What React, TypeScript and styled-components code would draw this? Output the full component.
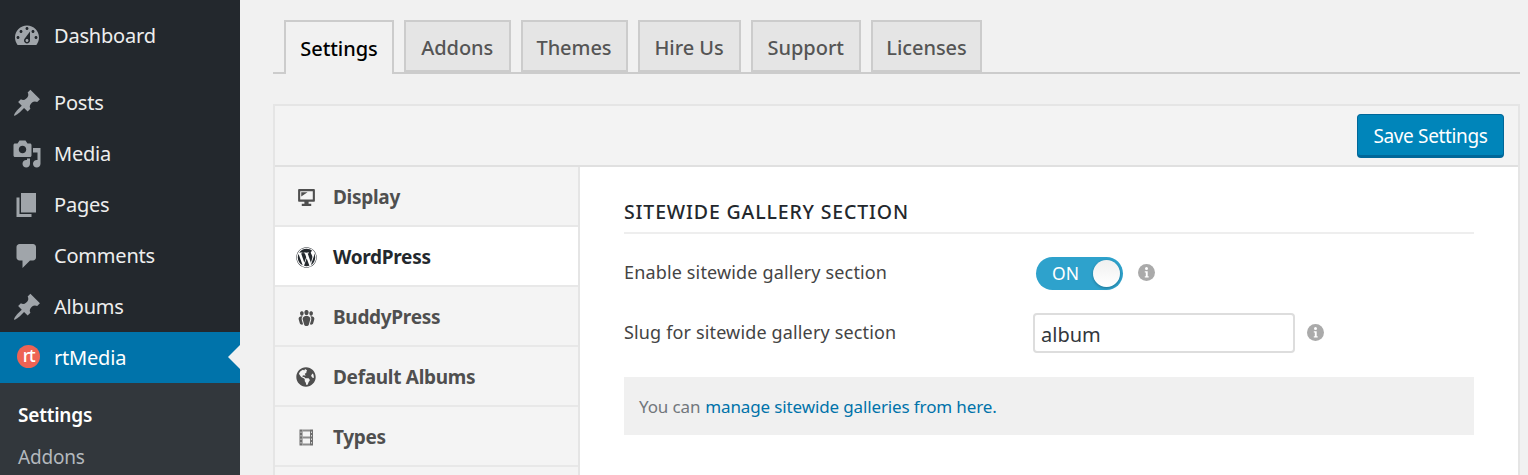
import React from "react";
import styled, { createGlobalStyle } from "styled-components";
import { FaWordpress, FaGlobeAmericas } from "react-icons/fa";

const FONT = `"Noto Sans", "Open Sans", "Liberation Sans", sans-serif`;

const Global = createGlobalStyle`
  html, body { margin: 0; padding: 0; height: 475px; overflow: hidden; background: #f1f1f1; }
  * { box-sizing: border-box; }
`;

const Page = styled.div`
  display: flex;
  width: 1528px;
  height: 475px;
  overflow: hidden;
  font-family: ${FONT};
`;

const Sidebar = styled.nav`
  width: 240px;
  flex: none;
  background: #23282d;
  padding-top: 10px;
  display: flex;
  flex-direction: column;
`;

const MenuRow = styled.div<{ $current?: boolean; $gap?: boolean }>`
  position: relative;
  height: 51px;
  flex: none;
  display: flex;
  align-items: center;
  padding-left: 12px;
  gap: 12px;
  margin-bottom: ${(p) => (p.$gap ? "16px" : "0")};
  background: ${(p) => (p.$current ? "#0073aa" : "transparent")};
  color: ${(p) => (p.$current ? "#fff" : "#eee")};
  font-size: 20px;
  letter-spacing: -0.2px;
  svg { fill: #a0a5aa; flex: none; }
`;

const Arrow = styled.span`
  position: absolute;
  right: 0;
  top: 13px;
  border: 12px solid transparent;
  border-right-color: #f1f1f1;
  border-left-width: 0;
`;

const RtLogo = styled.span`
  width: 23px;
  height: 23px;
  margin: -2px 2px 0 5px;
  border-radius: 50%;
  background: #ee6354;
  color: #fff;
  font-size: 18px;
  font-weight: 500;
  line-height: 21px;
  text-align: center;
  letter-spacing: -1.4px;
  flex: none;
`;

const Submenu = styled.div`
  flex: 1;
  background: #32373c;
  padding-top: 11px;
`;

const SubItem = styled.div<{ $current?: boolean }>`
  height: 42px;
  padding-left: 18px;
  display: flex;
  align-items: center;
  font-size: 19px;
  letter-spacing: -0.2px;
  font-weight: ${(p) => (p.$current ? 600 : 400)};
  color: ${(p) => (p.$current ? "#fff" : "#b4b9be")};
`;

const Main = styled.main`
  flex: 1;
  min-width: 0;
  padding: 20px 8px 0 33px;
  background: #f1f1f1;
`;

const TabBar = styled.div`
  height: 54px;
  display: flex;
  gap: 10px;
  padding-left: 11px;
  border-bottom: 2px solid #ccc;
`;

const Tab = styled.div<{ $active?: boolean; $w: number }>`
  width: ${(p) => p.$w}px;
  height: ${(p) => (p.$active ? "54px" : "52px")};
  display: flex;
  align-items: center;
  justify-content: center;
  padding-top: ${(p) => (p.$active ? "0" : "3px")};
  border: 2px solid #ccc;
  border-bottom: ${(p) => (p.$active ? "none" : "2px solid #ccc")};
  background: ${(p) => (p.$active ? "#f1f1f1" : "#e5e5e5")};
  color: ${(p) => (p.$active ? "#000" : "#555")};
  font-size: 20px;
  font-weight: 500;
  letter-spacing: -0.05px;
`;

const Panel = styled.section`
  margin-top: 30px;
  border: 2px solid #e5e5e5;
  border-bottom: none;
  height: 400px;
  background: #fff;
  display: flex;
  flex-direction: column;
`;

const PanelHead = styled.header`
  height: 61px;
  flex: none;
  background: #f3f3f3;
  border-bottom: 2px solid #e0e0e0;
  display: flex;
  align-items: flex-start;
  justify-content: flex-end;
  padding: 8px 14px 0 0;
`;

const SaveButton = styled.button`
  width: 147px;
  height: 44px;
  padding: 2px 0 0;
  background: #0085ba;
  border: 1px solid #006799;
  border-bottom-width: 3px;
  border-radius: 4px;
  color: #fff;
  font-family: ${FONT};
  font-size: 19px;
  letter-spacing: -0.35px;
`;

const Body = styled.div`
  flex: 1;
  display: flex;
`;

const SideNav = styled.div`
  width: 305px;
  flex: none;
  background: #f4f4f4;
  border-right: 2px solid #e5e5e5;
`;

const NavItem = styled.div<{ $active?: boolean }>`
  height: 60px;
  padding-top: 2px;
  display: flex;
  align-items: center;
  background: ${(p) => (p.$active ? "#fff" : "#f4f4f4")};
  border-bottom: 2px solid #e8e8e8;
  color: ${(p) => (p.$active ? "#23282d" : "#4f4f4f")};
  font-size: 19px;
  font-weight: 700;
  letter-spacing: -0.3px;
`;

const NavIcon = styled.span`
  width: 58px;
  flex: none;
  display: flex;
  justify-content: center;
  padding-left: 4px;
`;

const Content = styled.div`
  flex: 1;
  padding: 29px 44px 0 44px;
`;

const Heading = styled.h2`
  margin: 0 0 19px;
  height: 38px;
  font-size: 19.5px;
  line-height: 31px;
  font-weight: 500;
  letter-spacing: 0.85px;
  color: #23282d;
  border-bottom: 2px solid #eee;
`;

const FieldRow = styled.div`
  display: flex;
  align-items: center;
  height: 40px;
  margin-bottom: 20px;
`;

const Label = styled.label`
  width: 409px;
  flex: none;
  padding-bottom: 2px;
  font-size: 18px;
  letter-spacing: 0.15px;
  color: #444;
`;

const Toggle = styled.span`
  position: relative;
  width: 87px;
  height: 33px;
  margin: 0 15px 0 3px;
  border-radius: 17px;
  background: #2ea2cc;
  color: #fff;
  font-size: 17.5px;
  line-height: 33px;
  padding-left: 16px;
`;

const Knob = styled.span`
  position: absolute;
  right: 3px;
  top: 3px;
  width: 27px;
  height: 27px;
  border-radius: 50%;
  background: linear-gradient(#f0f0f0, #fff);
  box-shadow: 0 1px 3px rgba(0, 0, 0, 0.3);
`;

const TextField = styled.input`
  width: 262px;
  height: 40px;
  margin-right: 12px;
  padding: 3px 6px 0;
  border: 2px solid #ddd;
  border-radius: 4px;
  background: #fff;
  color: #32373c;
  font-family: ${FONT};
  font-size: 20px;
  outline: none;
`;

const Notice = styled.div`
  height: 58px;
  margin-top: 24px;
  padding: 0 15px;
  display: flex;
  align-items: center;
  gap: 5px;
  background: #f0f0f0;
  color: #72777c;
  font-size: 17px;
  letter-spacing: -0.13px;
  white-space: pre;
`;

const NoticeLink = styled.a`
  color: #0073aa;
`;

const InfoMark = styled.svg`
  flex: none;
  margin-top: -2px;
`;

const PATHS = {
  dashboard:
    "M3.76 16h12.48c1.1-1.37 1.76-3.11 1.76-5 0-4.42-3.58-8-8-8s-8 3.58-8 8c0 1.89.66 3.63 1.76 5zM10 4c.55 0 1 .45 1 1s-.45 1-1 1-1-.45-1-1 .45-1 1-1zM6 6c.55 0 1 .45 1 1s-.45 1-1 1-1-.45-1-1 .45-1 1-1zm8 0c.55 0 1 .45 1 1s-.45 1-1 1-1-.45-1-1 .45-1 1-1zm-5.37 5.55L12 7v6c0 1.1-.9 2-2 2s-2-.9-2-2c0-.57.24-1.08.63-1.45zM4 10c.55 0 1 .45 1 1s-.45 1-1 1-1-.45-1-1 .45-1 1-1zm12 0c.55 0 1 .45 1 1s-.45 1-1 1-1-.45-1-1 .45-1 1-1zm-5 3c0-.55-.45-1-1-1s-1 .45-1 1 .45 1 1 1 1-.45 1-1z",
  pin:
    "M10.44 3.02l1.82-1.82 6.36 6.35-1.83 1.82c-1.05-.68-2.48-.57-3.41.36l-.75.75c-.92.93-1.04 2.35-.35 3.41l-1.83 1.82-2.41-2.41-2.8 2.79c-.42.42-3.38 2.71-3.8 2.29s1.86-3.39 2.28-3.81l2.79-2.79L4.1 9.36l1.83-1.82c1.05.69 2.48.57 3.4-.36l.75-.75c.93-.92 1.05-2.35.36-3.41z",
  media:
    "M13 11V4c0-.55-.45-1-1-1h-1.67L9 1H5L3.67 3H2c-.55 0-1 .45-1 1v7c0 .55.45 1 1 1h10c.55 0 1-.45 1-1zM7 4.5c1.38 0 2.5 1.12 2.5 2.5S8.38 9.5 7 9.5 4.5 8.38 4.5 7 5.62 4.5 7 4.5zM14 6h5v10.5c0 1.38-1.12 2.5-2.5 2.5S14 17.88 14 16.5s1.12-2.5 2.5-2.5c.17 0 .34.02.5.05V9h-3V6zm-4 8.05V13h2v3.5c0 1.38-1.12 2.5-2.5 2.5S7 17.88 7 16.5 8.12 14 9.5 14c.17 0 .34.02.5.05z",
  pages: "M6 15V2h10v13H6zm-1 1h8v2H3V5h2v11z",
  comments:
    "M5 2h9c1.1 0 2 .9 2 2v7c0 1.1-.9 2-2 2h-2l-5 5v-5H5c-1.1 0-2-.9-2-2V4c0-1.1.9-2 2-2z",
  groups:
    "M8.03 4.46c-.29 1.28.55 3.46 1.97 3.46 1.41 0 2.25-2.18 1.96-3.46-.22-.98-1.08-1.63-1.96-1.63-.89 0-1.74.65-1.97 1.63zm-4.13.9c-.25 1.08.47 2.93 1.67 2.93s1.92-1.85 1.67-2.93c-.19-.83-.92-1.39-1.67-1.39s-1.48.56-1.67 1.39zm8.86 0c-.25 1.08.47 2.93 1.66 2.93 1.2 0 1.92-1.85 1.67-2.93-.19-.83-.92-1.39-1.67-1.39-.74 0-1.47.56-1.66 1.39zm-.59 11.43l1.25-4.3C14.2 10 12.71 8.47 10 8.47c-2.72 0-4.21 1.53-3.44 4.02l1.26 4.3C8.05 17.51 9 18 10 18c.98 0 1.94-.49 2.17-1.21zm-6.1-7.63c-.49.67-.96 1.83-.42 3.59l1.12 3.79c-.34.2-.77.31-1.2.31-.85 0-1.65-.41-1.85-1.03l-1.07-3.65c-.65-2.11.61-3.4 2.92-3.4.27 0 .54.02.79.06-.1.1-.2.22-.29.33zm8.35-.39c2.31 0 3.58 1.29 2.92 3.4l-1.07 3.65c-.2.62-1 1.03-1.85 1.03-.43 0-.86-.11-1.2-.31l1.11-3.77c.55-1.78.08-2.94-.42-3.61-.08-.11-.18-.23-.28-.33.25-.04.51-.06.79-.06z",
  desktop:
    "M3 2h14c.55 0 1 .45 1 1v10c0 .55-.45 1-1 1h-5v2h2.5v2h-9v-2H8v-2H3c-.55 0-1-.45-1-1V3c0-.55.45-1 1-1zm13 10V4H4v8h12zM5 5h6L5 9V5z",
};

const Dash = ({ d, size = 30, color }: { d: string; size?: number; color?: string }) => (
  <svg width={size} height={size} viewBox="0 0 20 20" fill={color} fillRule="evenodd" aria-hidden="true">
    <path d={d} />
  </svg>
);

const FilmIcon = () => (
  <svg width="20" height="20" viewBox="0 0 20 20" aria-hidden="true">
    <rect x="3.500" y="2.500" width="3" height="16" fill="#6f6f6f" />
    <rect x="14" y="2.500" width="3" height="16" fill="#6f6f6f" />
    <path
      d="M4.500 4.500h1v1.500h-1zM4.500 8h1v1.500h-1zM4.500 11.500h1V13h-1zM4.500 15h1v1.500h-1zM15 4.500h1v1.500h-1zM15 8h1v1.500h-1zM15 11.500h1V13h-1zM15 15h1v1.500h-1z"
      fill="#d8d8d8"
    />
    <path d="M6.500 2.500H14v2H6.500zM6.500 9.500H14v2H6.500zM6.500 16.500H14v2H6.500z" fill="#8c8c8c" />
  </svg>
);

const Info = () => (
  <InfoMark width="17" height="17" viewBox="0 0 17 17" aria-hidden="true">
    <circle cx="8.5" cy="8.5" r="8.500" fill="#aaa" />
    <circle cx="8.500" cy="4.600" r="1.500" fill="#fff" />
    <path d="M6.800 7.200h2.900v5h1v1.300H6.800v-1.300h1v-3.700h-1z" fill="#fff" />
  </InfoMark>
);

const menu = [
  { label: "Posts", d: PATHS.pin },
  { label: "Media", d: PATHS.media },
  { label: "Pages", d: PATHS.pages },
  { label: "Comments", d: PATHS.comments },
  { label: "Albums", d: PATHS.pin },
];

const tabs = [
  { label: "Settings", w: 110, active: true },
  { label: "Addons", w: 106.5 },
  { label: "Themes", w: 107 },
  { label: "Hire Us", w: 103 },
  { label: "Support", w: 110.5 },
  { label: "Licenses", w: 111 },
];

const NAV_COLOR = "#4f4f4f";
const nav = [
  { label: "Display", icon: <Dash d={PATHS.desktop} size={21} color={NAV_COLOR} /> },
  { label: "WordPress", active: true, icon: <FaWordpress size={21} color="#23282d" /> },
  { label: "BuddyPress", icon: <Dash d={PATHS.groups} size={21} color={NAV_COLOR} /> },
  { label: "Default Albums", icon: <FaGlobeAmericas size={20} color={NAV_COLOR} /> },
  { label: "Types", icon: <FilmIcon /> },
  { label: "", icon: null },
];

export default function App() {
  return (
    <Page>
      <Global />
      <Sidebar>
        <MenuRow $gap>
          <Dash d={PATHS.dashboard} />
          Dashboard
        </MenuRow>
        {menu.map((m) => (
          <MenuRow key={m.label}>
            <Dash d={m.d} />
            {m.label}
          </MenuRow>
        ))}
        <MenuRow $current>
          <RtLogo>rt</RtLogo>
          rtMedia
          <Arrow />
        </MenuRow>
        <Submenu>
          <SubItem $current>Settings</SubItem>
          <SubItem>Addons</SubItem>
        </Submenu>
      </Sidebar>
      <Main>
        <TabBar>
          {tabs.map((t) => (
            <Tab key={t.label} $active={t.active} $w={t.w}>
              {t.label}
            </Tab>
          ))}
        </TabBar>
        <Panel>
          <PanelHead>
            <SaveButton>Save Settings</SaveButton>
          </PanelHead>
          <Body>
            <SideNav>
              {nav.map((n) => (
                <NavItem key={n.label} $active={n.active}>
                  <NavIcon>{n.icon}</NavIcon>
                  {n.label}
                </NavItem>
              ))}
            </SideNav>
            <Content>
              <Heading>SITEWIDE GALLERY SECTION</Heading>
              <FieldRow>
                <Label>Enable sitewide gallery section</Label>
                <Toggle>
                  ON
                  <Knob />
                </Toggle>
                <Info />
              </FieldRow>
              <FieldRow>
                <Label>Slug for sitewide gallery section</Label>
                <TextField defaultValue="album" />
                <Info />
              </FieldRow>
              <Notice>
                <span>You can</span>
                <NoticeLink>manage sitewide galleries from here.</NoticeLink>
              </Notice>
            </Content>
          </Body>
        </Panel>
      </Main>
    </Page>
  );
}
